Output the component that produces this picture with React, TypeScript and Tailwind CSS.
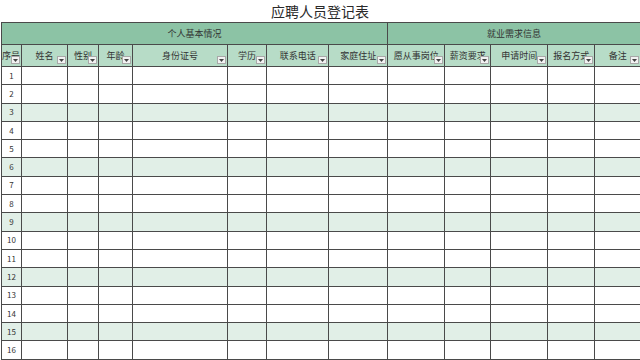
const columns = [
  { label: "序号", width: 20, filter: true },
  { label: "姓名", width: 46, filter: true },
  { label: "性别", width: 31, filter: true },
  { label: "年龄", width: 34, filter: true },
  { label: "身份证号", width: 95, filter: true },
  { label: "学历", width: 39, filter: true },
  { label: "联系电话", width: 62, filter: true },
  { label: "家庭住址", width: 59, filter: true },
  { label: "愿从事岗位", width: 57, filter: true },
  { label: "薪资要求", width: 46, filter: true },
  { label: "申请时间", width: 57, filter: true },
  { label: "报名方式", width: 47, filter: true },
  { label: "备注", width: 45, filter: true },
];

const rows = Array.from({ length: 16 }, (_, i) => i + 1);

function FilterButton() {
  return (
    <span className="absolute right-[1px] bottom-[2px] flex h-[8px] w-[9px] items-center justify-center border border-[#a8a8a8] bg-[#f2f2f2]">
      <svg width="5" height="3" viewBox="0 0 5 3">
        <path d="M0 0 L5 0 L2.5 3 Z" fill="#444" />
      </svg>
    </span>
  );
}

export default function App() {
  return (
    <div
      className="h-[360px] w-[640px] overflow-hidden bg-white text-[#333]"
      style={{ fontFamily: '"Noto Sans CJK SC", "Noto Sans", sans-serif' }}
    >
      {/* Title */}
      <div className="flex h-[22px] items-center justify-center text-[14px] leading-none text-[#2a2a2a]">
        应聘人员登记表
      </div>

      {/* Sheet */}
      <table className="ml-[1px] w-[639px] table-fixed border-collapse">
        <colgroup>
          {columns.map((c) => (
            <col key={c.label} style={{ width: c.width }} />
          ))}
        </colgroup>
        <thead>
          <tr className="h-[22px] bg-[#8cc3a5]">
            <th
              colSpan={8}
              className="border border-[#4a4a4a] text-center text-[9px] font-normal"
            >
              个人基本情况
            </th>
            <th
              colSpan={5}
              className="border border-[#4a4a4a] border-r-0 text-center text-[9px] font-normal"
            >
              就业需求信息
            </th>
          </tr>
          <tr className="h-[22px] bg-[#b7dcc7]">
            {columns.map((c, i) => (
              <th
                key={c.label}
                className={`relative overflow-hidden whitespace-nowrap border border-[#4a4a4a] p-0 text-center text-[9px] font-normal ${
                  i === columns.length - 1 ? "border-r-0" : ""
                }`}
              >
                <span className={i === 0 ? "block text-left" : ""}>{c.label}</span>
                {c.filter && <FilterButton />}
              </th>
            ))}
          </tr>
        </thead>
        <tbody>
          {rows.map((n) => (
            <tr
              key={n}
              className={`h-[18.3px] ${n % 3 === 0 ? "bg-[#e1efe7]" : "bg-white"}`}
            >
              {columns.map((c, i) => (
                <td
                  key={c.label}
                  className={`border border-[#4a4a4a] p-0 text-center text-[8px] leading-none ${
                    i === columns.length - 1 ? "border-r-0" : ""
                  }`}
                >
                  {i === 0 ? n : ""}
                </td>
              ))}
            </tr>
          ))}
        </tbody>
      </table>
    </div>
  );
}
